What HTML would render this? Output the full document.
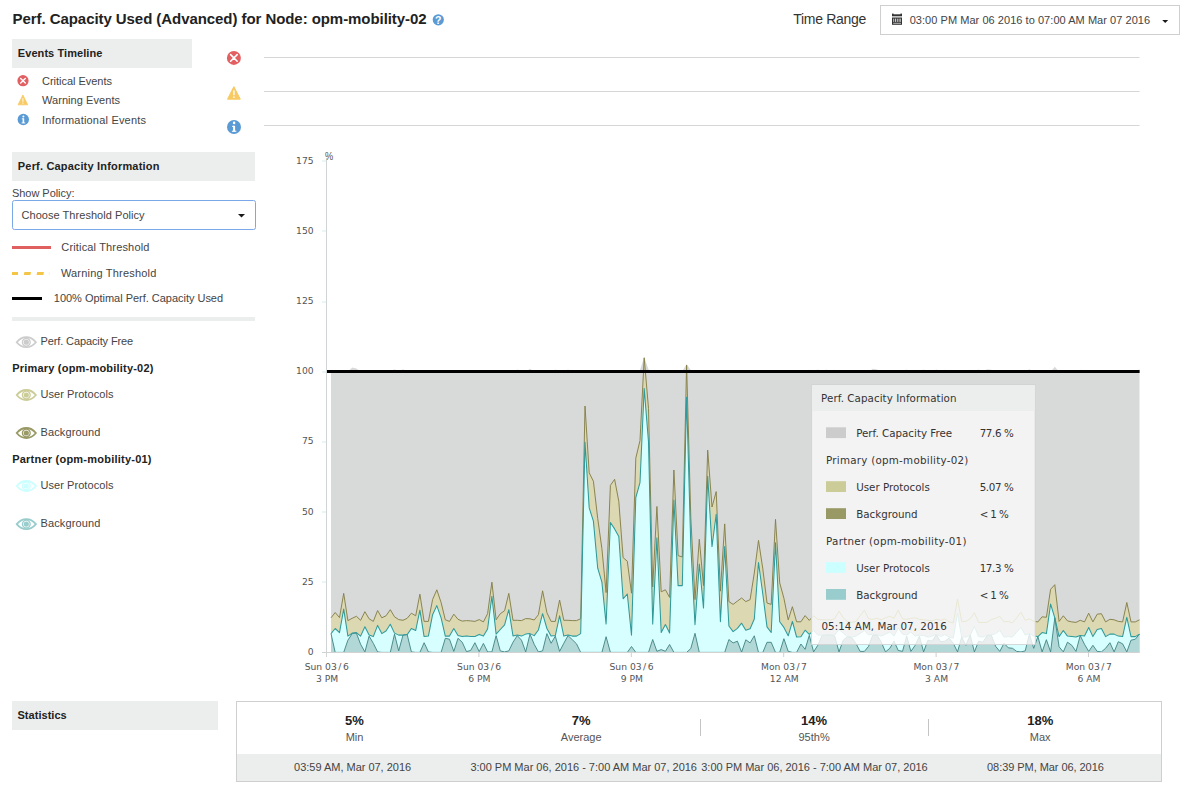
<!DOCTYPE html>
<html lang="en">
<head>
<meta charset="utf-8">
<title>Perf. Capacity Used (Advanced) for Node: opm-mobility-02</title>
<style>
html,body{margin:0;padding:0;background:#fff;}
body{width:1184px;height:787px;overflow:hidden;font-family:"Liberation Sans",sans-serif;}
#page{position:relative;width:1184px;height:787px;overflow:hidden;background:#fff;}
.t{position:absolute;white-space:nowrap;line-height:16px;font-family:"Liberation Sans",sans-serif;}
.box{position:absolute;background:#eceeee;}
.chart{position:absolute;left:0;top:0;}
.sel{position:absolute;left:11.9px;top:200px;width:243.8px;height:29.8px;box-sizing:border-box;border:1.5px solid #7ba8e8;border-radius:2.5px;background:#fff;}
.dd{position:absolute;left:880px;top:5px;width:298px;height:28px;border:1px solid #cfcfcf;background:#fff;}
.stats{position:absolute;left:236px;top:701px;width:926px;height:81px;border:1px solid #cfcfcf;box-sizing:border-box;background:#fff;}
.stats .row2{position:absolute;left:0;right:0;top:52px;bottom:0;background:#eceeee;}
.sep{position:absolute;top:17px;width:1px;height:17px;background:#c4c4c4;}

</style>
</head>
<body>
<div id="page">
<div class="box" style="left:12px;top:39px;width:180px;height:29px"></div>
<div class="box" style="left:12px;top:152px;width:243px;height:29px"></div>
<div class="box" style="left:12px;top:317px;width:243px;height:4px"></div>
<div class="box" style="left:12px;top:701px;width:206px;height:29px"></div>
<div class="sel"></div>
<div class="dd"></div>
<div class="stats"><div class="row2"></div><div class="sep" style="left:463px"></div><div class="sep" style="left:691px"></div></div>

<svg class="chart" width="1184" height="787" viewBox="0 0 1184 787">
<rect x="264" y="57.0" width="875.5" height="1" fill="#d6d6d6"/>
<rect x="264" y="91.0" width="875.5" height="1" fill="#d6d6d6"/>
<rect x="264" y="125.0" width="875.5" height="1" fill="#d6d6d6"/>
<polygon points="331.0,652.4 331.0,371.8 335.2,371.8 339.5,371.8 343.7,371.8 347.9,371.8 352.2,367.6 356.4,368.4 360.6,371.8 364.9,371.8 369.1,371.8 373.3,371.8 377.6,371.8 381.8,371.8 386.0,371.8 390.3,371.8 394.5,369.3 398.7,371.8 403.0,369.3 407.2,371.8 411.4,371.8 415.7,371.8 419.9,371.8 424.1,371.8 428.4,371.8 432.6,371.8 436.8,371.8 441.1,371.8 445.3,371.8 449.5,371.8 453.8,371.8 458.0,371.8 462.2,371.8 466.5,371.8 470.7,371.8 474.9,371.8 479.2,371.8 483.4,371.8 487.6,371.8 491.9,371.8 496.1,371.8 500.3,371.8 504.6,371.8 508.8,371.8 513.0,371.8 517.3,369.6 521.5,371.8 525.7,371.8 530.0,368.7 534.2,371.8 538.4,371.8 542.6,371.8 546.9,371.8 551.1,371.8 555.3,369.4 559.6,371.8 563.8,371.8 568.0,369.4 572.3,371.8 576.5,371.8 580.7,371.8 585.0,371.8 589.2,371.8 593.4,371.8 597.7,371.8 601.9,371.8 606.1,371.8 610.4,371.8 614.6,371.8 618.8,371.8 623.1,371.8 627.3,371.8 631.5,371.8 635.8,371.8 640.0,370.1 644.2,356.9 648.5,369.6 652.7,371.8 656.9,371.8 661.2,371.8 665.4,371.8 669.6,371.8 673.9,371.8 678.1,371.8 682.3,371.0 686.6,364.2 690.8,370.1 695.0,371.8 699.3,371.8 703.5,371.8 707.7,371.8 712.0,371.8 716.2,371.8 720.4,371.8 724.7,371.8 728.9,371.8 733.1,371.8 737.4,371.8 741.6,371.8 745.8,371.8 750.1,371.8 754.3,371.8 758.5,371.8 762.8,371.8 767.0,371.8 771.2,371.8 775.5,371.8 779.7,371.8 783.9,371.8 788.2,371.8 792.4,371.8 796.6,371.8 800.9,371.8 805.1,371.8 809.3,369.8 813.6,371.8 817.8,369.6 822.0,371.8 826.3,369.6 830.5,371.8 834.7,369.8 839.0,371.8 843.2,371.8 847.4,371.8 851.7,371.8 855.9,371.8 860.1,371.8 864.4,371.8 868.6,371.8 872.8,368.7 877.1,369.6 881.3,371.8 885.5,371.8 889.8,371.8 894.0,371.8 898.2,371.8 902.5,371.8 906.7,369.6 910.9,371.8 915.2,369.8 919.4,371.8 923.6,369.6 927.9,371.8 932.1,371.8 936.3,369.6 940.6,371.8 944.8,369.8 949.0,371.8 953.3,371.8 957.5,371.8 961.7,371.8 965.9,371.8 970.2,369.8 974.4,371.8 978.6,369.6 982.9,371.8 987.1,369.3 991.3,369.8 995.6,371.8 999.8,371.8 1004.0,371.8 1008.3,371.8 1012.5,371.8 1016.7,371.8 1021.0,371.8 1025.2,371.8 1029.4,369.3 1033.7,371.8 1037.9,371.8 1042.1,371.8 1046.4,371.8 1050.6,371.8 1054.8,366.7 1059.1,371.8 1063.3,371.8 1067.5,371.8 1071.8,371.8 1076.0,371.8 1080.2,369.8 1084.5,371.8 1088.7,371.8 1092.9,371.8 1097.2,371.8 1101.4,371.8 1105.6,371.8 1109.9,371.8 1114.1,371.8 1118.3,371.8 1122.6,371.8 1126.8,371.8 1131.0,371.8 1135.3,371.8 1139.5,369.3 1139.5,652.4" fill="#d8d9d9"/>
<polygon points="331.0,652.4 331.0,617.8 335.2,612.5 339.5,617.6 343.7,593.4 347.9,620.6 352.2,618.3 356.4,616.3 360.6,620.3 364.9,611.7 369.1,618.8 373.3,621.4 377.6,610.5 381.8,617.8 386.0,615.8 390.3,609.7 394.5,616.8 398.7,619.6 403.0,620.3 407.2,618.3 411.4,613.2 415.7,615.8 419.9,594.2 424.1,621.4 428.4,621.4 432.6,599.5 436.8,589.8 441.1,602.5 445.3,619.8 449.5,621.4 453.8,614.2 458.0,619.3 462.2,621.1 466.5,620.6 470.7,620.9 474.9,621.4 479.2,619.6 483.4,621.9 487.6,613.7 491.9,582.2 496.1,619.8 500.3,613.7 504.6,610.7 508.8,593.4 513.0,620.3 517.3,620.3 521.5,620.6 525.7,618.6 530.0,618.8 534.2,620.0 538.4,614.7 542.6,590.8 546.9,612.7 551.1,621.4 555.3,621.4 559.6,600.0 563.8,620.3 568.0,620.3 572.3,620.6 576.5,620.6 580.7,618.8 585.0,406.0 589.2,472.8 593.4,481.2 597.7,518.3 601.9,548.6 606.1,592.6 610.4,485.4 614.6,479.3 618.8,501.4 623.1,557.6 627.3,561.2 631.5,593.2 635.8,458.2 640.0,440.5 644.2,357.8 648.5,408.3 652.7,587.0 656.9,506.5 661.2,591.8 665.4,589.8 669.6,597.4 673.9,470.0 678.1,555.6 682.3,557.0 686.6,365.1 690.8,517.7 695.0,599.6 699.3,539.3 703.5,585.6 707.7,450.1 712.0,507.0 716.2,491.6 720.4,591.2 724.7,523.9 728.9,601.6 733.1,604.4 737.4,601.1 741.6,598.0 745.8,601.6 750.1,599.6 754.3,573.0 758.5,540.4 762.8,568.8 767.0,603.0 771.2,604.4 775.5,519.4 779.7,582.8 783.9,598.2 788.2,619.9 792.4,606.7 796.6,621.8 800.9,621.8 805.1,615.6 809.3,620.4 813.6,615.8 817.8,619.3 822.0,619.8 826.3,619.8 830.5,619.8 834.7,618.8 839.0,611.2 843.2,617.8 847.4,621.4 851.7,622.4 855.9,621.4 860.1,615.8 864.4,610.2 868.6,618.8 872.8,619.3 877.1,618.3 881.3,619.8 885.5,617.8 889.8,616.3 894.0,618.3 898.2,610.2 902.5,618.8 906.7,619.3 910.9,618.3 915.2,617.8 919.4,619.3 923.6,619.8 927.9,620.3 932.1,620.9 936.3,619.3 940.6,620.3 944.8,618.8 949.0,621.9 953.3,622.9 957.5,599.0 961.7,621.4 965.9,621.4 970.2,618.8 974.4,612.7 978.6,622.4 982.9,622.4 987.1,622.4 991.3,619.3 995.6,618.3 999.8,616.3 1004.0,621.9 1008.3,621.4 1012.5,622.9 1016.7,617.8 1021.0,612.2 1025.2,620.3 1029.4,618.8 1033.7,621.4 1037.9,621.9 1042.1,616.8 1046.4,617.3 1050.6,589.3 1054.8,584.7 1059.1,621.4 1063.3,615.8 1067.5,620.9 1071.8,621.9 1076.0,622.4 1080.2,620.3 1084.5,621.9 1088.7,613.2 1092.9,621.9 1097.2,614.2 1101.4,613.7 1105.6,621.9 1109.9,619.3 1114.1,619.8 1118.3,621.4 1122.6,621.9 1126.8,602.5 1131.0,621.9 1135.3,621.9 1139.5,619.8 1139.5,652.4" fill="#dbd8b2"/>
<polygon points="331.0,652.4 331.0,633.6 335.2,628.5 339.5,632.6 343.7,609.1 347.9,636.1 352.2,633.1 356.4,632.6 360.6,636.1 364.9,626.8 369.1,635.1 373.3,636.6 377.6,625.4 381.8,633.6 386.0,631.0 390.3,624.2 394.5,633.1 398.7,635.1 403.0,635.1 407.2,634.6 411.4,628.5 415.7,630.5 419.9,610.2 424.1,636.6 428.4,636.1 432.6,614.7 436.8,605.6 441.1,617.8 445.3,636.1 449.5,636.1 453.8,628.5 458.0,635.6 462.2,636.6 466.5,635.9 470.7,636.4 474.9,636.4 479.2,634.4 483.4,636.1 487.6,629.0 491.9,596.4 496.1,634.1 500.3,629.5 504.6,624.9 508.8,609.7 513.0,635.9 517.3,634.9 521.5,636.1 525.7,634.1 530.0,633.6 534.2,635.6 538.4,630.0 542.6,613.7 546.9,628.5 551.1,636.1 555.3,635.6 559.6,615.8 563.8,636.1 568.0,635.1 572.3,636.1 576.5,636.1 580.7,633.6 585.0,442.2 589.2,507.9 593.4,521.1 597.7,568.2 601.9,582.2 606.1,624.1 610.4,522.5 614.6,528.9 618.8,536.5 623.1,598.8 627.3,594.0 631.5,635.3 635.8,497.5 640.0,482.6 644.2,388.6 648.5,441.9 652.7,624.1 656.9,537.9 661.2,632.5 665.4,624.6 669.6,633.0 673.9,500.0 678.1,585.6 682.3,585.6 686.6,397.3 690.8,545.8 695.0,624.6 699.3,564.0 703.5,608.1 707.7,476.2 712.0,546.6 716.2,514.3 720.4,621.8 724.7,546.6 728.9,626.0 733.1,631.6 737.4,628.3 741.6,623.2 745.8,630.2 750.1,628.8 754.3,619.0 758.5,562.6 762.8,594.0 767.0,626.9 771.2,632.5 775.5,542.7 779.7,621.8 783.9,627.4 788.2,635.8 792.4,621.5 796.6,637.0 800.9,636.7 805.1,630.2 809.3,634.4 813.6,630.5 817.8,635.1 822.0,635.1 826.3,635.1 830.5,635.1 834.7,635.1 839.0,629.5 843.2,633.1 847.4,636.6 851.7,637.1 855.9,636.1 860.1,633.6 864.4,630.5 868.6,635.1 872.8,634.1 877.1,634.6 881.3,636.1 885.5,634.1 889.8,632.1 894.0,636.1 898.2,628.0 902.5,634.1 906.7,635.1 910.9,632.1 915.2,636.1 919.4,635.1 923.6,635.6 927.9,637.1 932.1,636.1 936.3,634.1 940.6,636.6 944.8,634.6 949.0,637.1 953.3,638.1 957.5,613.2 961.7,637.1 965.9,637.1 970.2,635.1 974.4,626.4 978.6,636.6 982.9,637.1 987.1,635.1 991.3,635.1 995.6,633.6 999.8,630.5 1004.0,637.1 1008.3,636.6 1012.5,637.1 1016.7,632.1 1021.0,627.5 1025.2,635.1 1029.4,633.6 1033.7,636.1 1037.9,636.6 1042.1,632.6 1046.4,633.6 1050.6,604.1 1054.8,617.8 1059.1,636.6 1063.3,630.5 1067.5,636.1 1071.8,636.6 1076.0,637.1 1080.2,635.6 1084.5,636.1 1088.7,627.5 1092.9,636.6 1097.2,629.5 1101.4,628.5 1105.6,636.6 1109.9,634.1 1114.1,634.1 1118.3,636.1 1122.6,636.6 1126.8,617.3 1131.0,636.6 1135.3,636.6 1139.5,634.1 1139.5,652.4" fill="#d8ffff"/>
<polygon points="331.0,652.4 331.0,633.6 335.2,652.4 339.5,652.4 343.7,652.4 347.9,640.2 352.2,633.6 356.4,633.1 360.6,644.3 364.9,651.9 369.1,636.1 373.3,643.3 377.6,651.9 381.8,652.4 386.0,652.4 390.3,652.4 394.5,634.1 398.7,650.9 403.0,635.1 407.2,634.6 411.4,651.9 415.7,652.4 419.9,652.4 424.1,642.7 428.4,651.9 432.6,652.4 436.8,652.4 441.1,652.4 445.3,638.3 449.5,639.2 453.8,651.4 458.0,638.3 462.2,642.2 466.5,651.6 470.7,650.4 474.9,642.7 479.2,651.6 483.4,643.4 487.6,651.9 491.9,651.9 496.1,635.6 500.3,650.9 504.6,651.9 508.8,650.9 513.0,642.2 517.3,635.6 521.5,640.2 525.7,651.9 530.0,634.1 534.2,644.3 538.4,651.9 542.6,650.9 546.9,633.6 551.1,643.3 555.3,636.1 559.6,651.4 563.8,643.3 568.0,635.6 572.3,639.7 576.5,643.8 580.7,652.4 585.0,652.4 589.2,652.4 593.4,652.4 597.7,652.4 601.9,652.4 606.1,636.7 610.4,652.4 614.6,652.4 618.8,652.4 623.1,652.4 627.3,652.4 631.5,646.5 635.8,652.4 640.0,652.4 644.2,652.4 648.5,652.4 652.7,639.5 656.9,651.3 661.2,649.6 665.4,651.3 669.6,644.5 673.9,652.4 678.1,652.4 682.3,652.4 686.6,652.4 690.8,648.5 695.0,633.3 699.3,652.4 703.5,652.4 707.7,652.4 712.0,652.4 716.2,652.4 720.4,652.4 724.7,652.4 728.9,639.5 733.1,642.9 737.4,641.2 741.6,652.1 745.8,639.8 750.1,642.9 754.3,635.8 758.5,652.4 762.8,652.4 767.0,642.3 771.2,642.3 775.5,652.4 779.7,652.4 783.9,638.7 788.2,651.3 792.4,652.4 796.6,652.4 800.9,644.0 805.1,649.3 809.3,635.3 813.6,651.9 817.8,645.3 822.0,635.6 826.3,635.1 830.5,635.1 834.7,636.1 839.0,651.9 843.2,640.2 847.4,636.6 851.7,637.6 855.9,643.3 860.1,651.4 864.4,651.4 868.6,646.3 872.8,635.1 877.1,635.1 881.3,642.2 885.5,651.9 889.8,648.3 894.0,641.2 898.2,650.4 902.5,651.4 906.7,636.1 910.9,651.4 915.2,645.3 919.4,636.1 923.6,651.9 927.9,640.2 932.1,641.2 936.3,634.6 940.6,641.7 944.8,641.2 949.0,638.1 953.3,643.3 957.5,651.9 961.7,637.1 965.9,645.3 970.2,635.1 974.4,651.9 978.6,641.2 982.9,642.2 987.1,635.6 991.3,635.1 995.6,646.3 999.8,651.4 1004.0,643.3 1008.3,647.8 1012.5,648.3 1016.7,651.4 1021.0,651.9 1025.2,650.9 1029.4,634.1 1033.7,648.3 1037.9,636.6 1042.1,651.9 1046.4,639.7 1050.6,651.9 1054.8,617.8 1059.1,646.8 1063.3,651.9 1067.5,642.2 1071.8,645.3 1076.0,651.4 1080.2,635.6 1084.5,644.3 1088.7,651.4 1092.9,645.3 1097.2,651.4 1101.4,651.9 1105.6,648.3 1109.9,642.7 1114.1,651.9 1118.3,641.7 1122.6,643.8 1126.8,651.9 1131.0,640.2 1135.3,639.2 1139.5,634.1 1139.5,652.4" fill="#b1d8d6"/>
<polyline points="331.0,633.6 335.2,652.4 339.5,652.4 343.7,652.4 347.9,640.2 352.2,633.6 356.4,633.1 360.6,644.3 364.9,651.9 369.1,636.1 373.3,643.3 377.6,651.9 381.8,652.4 386.0,652.4 390.3,652.4 394.5,634.1 398.7,650.9 403.0,635.1 407.2,634.6 411.4,651.9 415.7,652.4 419.9,652.4 424.1,642.7 428.4,651.9 432.6,652.4 436.8,652.4 441.1,652.4 445.3,638.3 449.5,639.2 453.8,651.4 458.0,638.3 462.2,642.2 466.5,651.6 470.7,650.4 474.9,642.7 479.2,651.6 483.4,643.4 487.6,651.9 491.9,651.9 496.1,635.6 500.3,650.9 504.6,651.9 508.8,650.9 513.0,642.2 517.3,635.6 521.5,640.2 525.7,651.9 530.0,634.1 534.2,644.3 538.4,651.9 542.6,650.9 546.9,633.6 551.1,643.3 555.3,636.1 559.6,651.4 563.8,643.3 568.0,635.6 572.3,639.7 576.5,643.8 580.7,652.4 585.0,652.4 589.2,652.4 593.4,652.4 597.7,652.4 601.9,652.4 606.1,636.7 610.4,652.4 614.6,652.4 618.8,652.4 623.1,652.4 627.3,652.4 631.5,646.5 635.8,652.4 640.0,652.4 644.2,652.4 648.5,652.4 652.7,639.5 656.9,651.3 661.2,649.6 665.4,651.3 669.6,644.5 673.9,652.4 678.1,652.4 682.3,652.4 686.6,652.4 690.8,648.5 695.0,633.3 699.3,652.4 703.5,652.4 707.7,652.4 712.0,652.4 716.2,652.4 720.4,652.4 724.7,652.4 728.9,639.5 733.1,642.9 737.4,641.2 741.6,652.1 745.8,639.8 750.1,642.9 754.3,635.8 758.5,652.4 762.8,652.4 767.0,642.3 771.2,642.3 775.5,652.4 779.7,652.4 783.9,638.7 788.2,651.3 792.4,652.4 796.6,652.4 800.9,644.0 805.1,649.3 809.3,635.3 813.6,651.9 817.8,645.3 822.0,635.6 826.3,635.1 830.5,635.1 834.7,636.1 839.0,651.9 843.2,640.2 847.4,636.6 851.7,637.6 855.9,643.3 860.1,651.4 864.4,651.4 868.6,646.3 872.8,635.1 877.1,635.1 881.3,642.2 885.5,651.9 889.8,648.3 894.0,641.2 898.2,650.4 902.5,651.4 906.7,636.1 910.9,651.4 915.2,645.3 919.4,636.1 923.6,651.9 927.9,640.2 932.1,641.2 936.3,634.6 940.6,641.7 944.8,641.2 949.0,638.1 953.3,643.3 957.5,651.9 961.7,637.1 965.9,645.3 970.2,635.1 974.4,651.9 978.6,641.2 982.9,642.2 987.1,635.6 991.3,635.1 995.6,646.3 999.8,651.4 1004.0,643.3 1008.3,647.8 1012.5,648.3 1016.7,651.4 1021.0,651.9 1025.2,650.9 1029.4,634.1 1033.7,648.3 1037.9,636.6 1042.1,651.9 1046.4,639.7 1050.6,651.9 1054.8,617.8 1059.1,646.8 1063.3,651.9 1067.5,642.2 1071.8,645.3 1076.0,651.4 1080.2,635.6 1084.5,644.3 1088.7,651.4 1092.9,645.3 1097.2,651.4 1101.4,651.9 1105.6,648.3 1109.9,642.7 1114.1,651.9 1118.3,641.7 1122.6,643.8 1126.8,651.9 1131.0,640.2 1135.3,639.2 1139.5,634.1" fill="none" stroke="#3f8282" stroke-width="0.9" stroke-linejoin="round"/>
<polyline points="331.0,617.8 335.2,612.5 339.5,617.6 343.7,593.4 347.9,620.6 352.2,618.3 356.4,616.3 360.6,620.3 364.9,611.7 369.1,618.8 373.3,621.4 377.6,610.5 381.8,617.8 386.0,615.8 390.3,609.7 394.5,616.8 398.7,619.6 403.0,620.3 407.2,618.3 411.4,613.2 415.7,615.8 419.9,594.2 424.1,621.4 428.4,621.4 432.6,599.5 436.8,589.8 441.1,602.5 445.3,619.8 449.5,621.4 453.8,614.2 458.0,619.3 462.2,621.1 466.5,620.6 470.7,620.9 474.9,621.4 479.2,619.6 483.4,621.9 487.6,613.7 491.9,582.2 496.1,619.8 500.3,613.7 504.6,610.7 508.8,593.4 513.0,620.3 517.3,620.3 521.5,620.6 525.7,618.6 530.0,618.8 534.2,620.0 538.4,614.7 542.6,590.8 546.9,612.7 551.1,621.4 555.3,621.4 559.6,600.0 563.8,620.3 568.0,620.3 572.3,620.6 576.5,620.6 580.7,618.8 585.0,406.0 589.2,472.8 593.4,481.2 597.7,518.3 601.9,548.6 606.1,592.6 610.4,485.4 614.6,479.3 618.8,501.4 623.1,557.6 627.3,561.2 631.5,593.2 635.8,458.2 640.0,440.5 644.2,357.8 648.5,408.3 652.7,587.0 656.9,506.5 661.2,591.8 665.4,589.8 669.6,597.4 673.9,470.0 678.1,555.6 682.3,557.0 686.6,365.1 690.8,517.7 695.0,599.6 699.3,539.3 703.5,585.6 707.7,450.1 712.0,507.0 716.2,491.6 720.4,591.2 724.7,523.9 728.9,601.6 733.1,604.4 737.4,601.1 741.6,598.0 745.8,601.6 750.1,599.6 754.3,573.0 758.5,540.4 762.8,568.8 767.0,603.0 771.2,604.4 775.5,519.4 779.7,582.8 783.9,598.2 788.2,619.9 792.4,606.7 796.6,621.8 800.9,621.8 805.1,615.6 809.3,620.4 813.6,615.8 817.8,619.3 822.0,619.8 826.3,619.8 830.5,619.8 834.7,618.8 839.0,611.2 843.2,617.8 847.4,621.4 851.7,622.4 855.9,621.4 860.1,615.8 864.4,610.2 868.6,618.8 872.8,619.3 877.1,618.3 881.3,619.8 885.5,617.8 889.8,616.3 894.0,618.3 898.2,610.2 902.5,618.8 906.7,619.3 910.9,618.3 915.2,617.8 919.4,619.3 923.6,619.8 927.9,620.3 932.1,620.9 936.3,619.3 940.6,620.3 944.8,618.8 949.0,621.9 953.3,622.9 957.5,599.0 961.7,621.4 965.9,621.4 970.2,618.8 974.4,612.7 978.6,622.4 982.9,622.4 987.1,622.4 991.3,619.3 995.6,618.3 999.8,616.3 1004.0,621.9 1008.3,621.4 1012.5,622.9 1016.7,617.8 1021.0,612.2 1025.2,620.3 1029.4,618.8 1033.7,621.4 1037.9,621.9 1042.1,616.8 1046.4,617.3 1050.6,589.3 1054.8,584.7 1059.1,621.4 1063.3,615.8 1067.5,620.9 1071.8,621.9 1076.0,622.4 1080.2,620.3 1084.5,621.9 1088.7,613.2 1092.9,621.9 1097.2,614.2 1101.4,613.7 1105.6,621.9 1109.9,619.3 1114.1,619.8 1118.3,621.4 1122.6,621.9 1126.8,602.5 1131.0,621.9 1135.3,621.9 1139.5,619.8" fill="none" stroke="#857f4a" stroke-width="0.95" stroke-linejoin="round"/>
<polyline points="331.0,633.6 335.2,628.5 339.5,632.6 343.7,609.1 347.9,636.1 352.2,633.1 356.4,632.6 360.6,636.1 364.9,626.8 369.1,635.1 373.3,636.6 377.6,625.4 381.8,633.6 386.0,631.0 390.3,624.2 394.5,633.1 398.7,635.1 403.0,635.1 407.2,634.6 411.4,628.5 415.7,630.5 419.9,610.2 424.1,636.6 428.4,636.1 432.6,614.7 436.8,605.6 441.1,617.8 445.3,636.1 449.5,636.1 453.8,628.5 458.0,635.6 462.2,636.6 466.5,635.9 470.7,636.4 474.9,636.4 479.2,634.4 483.4,636.1 487.6,629.0 491.9,596.4 496.1,634.1 500.3,629.5 504.6,624.9 508.8,609.7 513.0,635.9 517.3,634.9 521.5,636.1 525.7,634.1 530.0,633.6 534.2,635.6 538.4,630.0 542.6,613.7 546.9,628.5 551.1,636.1 555.3,635.6 559.6,615.8 563.8,636.1 568.0,635.1 572.3,636.1 576.5,636.1 580.7,633.6 585.0,442.2 589.2,507.9 593.4,521.1 597.7,568.2 601.9,582.2 606.1,624.1 610.4,522.5 614.6,528.9 618.8,536.5 623.1,598.8 627.3,594.0 631.5,635.3 635.8,497.5 640.0,482.6 644.2,388.6 648.5,441.9 652.7,624.1 656.9,537.9 661.2,632.5 665.4,624.6 669.6,633.0 673.9,500.0 678.1,585.6 682.3,585.6 686.6,397.3 690.8,545.8 695.0,624.6 699.3,564.0 703.5,608.1 707.7,476.2 712.0,546.6 716.2,514.3 720.4,621.8 724.7,546.6 728.9,626.0 733.1,631.6 737.4,628.3 741.6,623.2 745.8,630.2 750.1,628.8 754.3,619.0 758.5,562.6 762.8,594.0 767.0,626.9 771.2,632.5 775.5,542.7 779.7,621.8 783.9,627.4 788.2,635.8 792.4,621.5 796.6,637.0 800.9,636.7 805.1,630.2 809.3,634.4 813.6,630.5 817.8,635.1 822.0,635.1 826.3,635.1 830.5,635.1 834.7,635.1 839.0,629.5 843.2,633.1 847.4,636.6 851.7,637.1 855.9,636.1 860.1,633.6 864.4,630.5 868.6,635.1 872.8,634.1 877.1,634.6 881.3,636.1 885.5,634.1 889.8,632.1 894.0,636.1 898.2,628.0 902.5,634.1 906.7,635.1 910.9,632.1 915.2,636.1 919.4,635.1 923.6,635.6 927.9,637.1 932.1,636.1 936.3,634.1 940.6,636.6 944.8,634.6 949.0,637.1 953.3,638.1 957.5,613.2 961.7,637.1 965.9,637.1 970.2,635.1 974.4,626.4 978.6,636.6 982.9,637.1 987.1,635.1 991.3,635.1 995.6,633.6 999.8,630.5 1004.0,637.1 1008.3,636.6 1012.5,637.1 1016.7,632.1 1021.0,627.5 1025.2,635.1 1029.4,633.6 1033.7,636.1 1037.9,636.6 1042.1,632.6 1046.4,633.6 1050.6,604.1 1054.8,617.8 1059.1,636.6 1063.3,630.5 1067.5,636.1 1071.8,636.6 1076.0,637.1 1080.2,635.6 1084.5,636.1 1088.7,627.5 1092.9,636.6 1097.2,629.5 1101.4,628.5 1105.6,636.6 1109.9,634.1 1114.1,634.1 1118.3,636.1 1122.6,636.6 1126.8,617.3 1131.0,636.6 1135.3,636.6 1139.5,634.1" fill="none" stroke="#2f9a9a" stroke-width="1.05" stroke-linejoin="round"/>
<rect x="326" y="158" width="1" height="499" fill="#d0d4d4"/>
<rect x="322" y="652" width="817.5" height="1" fill="#d2d2d2"/>
<rect x="322" y="581.5" width="4" height="1" fill="#d6ecee"/>
<rect x="322" y="511.5" width="4" height="1" fill="#d6ecee"/>
<rect x="322" y="441.5" width="4" height="1" fill="#d6ecee"/>
<rect x="322" y="371.5" width="4" height="1" fill="#d6ecee"/>
<rect x="322" y="301.5" width="4" height="1" fill="#d6ecee"/>
<rect x="322" y="230.5" width="4" height="1" fill="#d6ecee"/>
<rect x="322" y="160.5" width="4" height="1" fill="#d6ecee"/>
<text x="313.6" y="654.8" text-anchor="end" font-size="9.2" fill="#555" font-family='"DejaVu Sans", "Liberation Sans", sans-serif'>0</text>
<text x="313.6" y="584.6" text-anchor="end" font-size="9.2" fill="#555" font-family='"DejaVu Sans", "Liberation Sans", sans-serif'>25</text>
<text x="313.6" y="514.5" text-anchor="end" font-size="9.2" fill="#555" font-family='"DejaVu Sans", "Liberation Sans", sans-serif'>50</text>
<text x="313.6" y="444.3" text-anchor="end" font-size="9.2" fill="#555" font-family='"DejaVu Sans", "Liberation Sans", sans-serif'>75</text>
<text x="313.6" y="374.2" text-anchor="end" font-size="9.2" fill="#555" font-family='"DejaVu Sans", "Liberation Sans", sans-serif'>100</text>
<text x="313.6" y="304.0" text-anchor="end" font-size="9.2" fill="#555" font-family='"DejaVu Sans", "Liberation Sans", sans-serif'>125</text>
<text x="313.6" y="233.9" text-anchor="end" font-size="9.2" fill="#555" font-family='"DejaVu Sans", "Liberation Sans", sans-serif'>150</text>
<text x="313.6" y="163.7" text-anchor="end" font-size="9.2" fill="#555" font-family='"DejaVu Sans", "Liberation Sans", sans-serif'>175</text>
<text x="324.9" y="160" font-size="10.5" fill="#555" textLength="8.2" lengthAdjust="spacingAndGlyphs" font-family='"Liberation Sans", sans-serif'>%</text>
<text x="304.7" y="669.9" font-size="9.2" fill="#555" font-family='"DejaVu Sans", "Liberation Sans", sans-serif'>Sun 03<tspan dx="1.5">/</tspan><tspan dx="1.5">6</tspan></text>
<text x="327.0" y="681.9" text-anchor="middle" font-size="9.2" fill="#555" font-family='"DejaVu Sans", "Liberation Sans", sans-serif'>3 PM</text>
<rect x="478.4" y="652" width="1" height="5" fill="#d0d0d0"/>
<text x="457.1" y="669.9" font-size="9.2" fill="#555" font-family='"DejaVu Sans", "Liberation Sans", sans-serif'>Sun 03<tspan dx="1.5">/</tspan><tspan dx="1.5">6</tspan></text>
<text x="479.4" y="681.9" text-anchor="middle" font-size="9.2" fill="#555" font-family='"DejaVu Sans", "Liberation Sans", sans-serif'>6 PM</text>
<rect x="630.8" y="652" width="1" height="5" fill="#d0d0d0"/>
<text x="609.5" y="669.9" font-size="9.2" fill="#555" font-family='"DejaVu Sans", "Liberation Sans", sans-serif'>Sun 03<tspan dx="1.5">/</tspan><tspan dx="1.5">6</tspan></text>
<text x="631.8" y="681.9" text-anchor="middle" font-size="9.2" fill="#555" font-family='"DejaVu Sans", "Liberation Sans", sans-serif'>9 PM</text>
<rect x="783.2" y="652" width="1" height="5" fill="#d0d0d0"/>
<text x="761.0" y="669.9" font-size="9.2" fill="#555" font-family='"DejaVu Sans", "Liberation Sans", sans-serif'>Mon 03<tspan dx="1.5">/</tspan><tspan dx="1.5">7</tspan></text>
<text x="784.2" y="681.9" text-anchor="middle" font-size="9.2" fill="#555" font-family='"DejaVu Sans", "Liberation Sans", sans-serif'>12 AM</text>
<rect x="935.6" y="652" width="1" height="5" fill="#d0d0d0"/>
<text x="913.4" y="669.9" font-size="9.2" fill="#555" font-family='"DejaVu Sans", "Liberation Sans", sans-serif'>Mon 03<tspan dx="1.5">/</tspan><tspan dx="1.5">7</tspan></text>
<text x="936.6" y="681.9" text-anchor="middle" font-size="9.2" fill="#555" font-family='"DejaVu Sans", "Liberation Sans", sans-serif'>3 AM</text>
<rect x="1088.0" y="652" width="1" height="5" fill="#d0d0d0"/>
<text x="1065.8" y="669.9" font-size="9.2" fill="#555" font-family='"DejaVu Sans", "Liberation Sans", sans-serif'>Mon 03<tspan dx="1.5">/</tspan><tspan dx="1.5">7</tspan></text>
<text x="1089.0" y="681.9" text-anchor="middle" font-size="9.2" fill="#555" font-family='"DejaVu Sans", "Liberation Sans", sans-serif'>6 AM</text>
<rect x="327" y="370" width="812.6" height="3" fill="#000"/>
<defs><clipPath id="ttc"><rect x="812.1" y="385" width="222.6" height="258.9"/></clipPath></defs>
<g>
<rect x="811.6" y="384.5" width="223.6" height="259.9" fill="#f3f3f3" stroke="#d2d4d4" stroke-width="1"/>
<g clip-path="url(#ttc)">
<polygon points="331.0,652.4 331.0,633.6 335.2,628.5 339.5,632.6 343.7,609.1 347.9,636.1 352.2,633.1 356.4,632.6 360.6,636.1 364.9,626.8 369.1,635.1 373.3,636.6 377.6,625.4 381.8,633.6 386.0,631.0 390.3,624.2 394.5,633.1 398.7,635.1 403.0,635.1 407.2,634.6 411.4,628.5 415.7,630.5 419.9,610.2 424.1,636.6 428.4,636.1 432.6,614.7 436.8,605.6 441.1,617.8 445.3,636.1 449.5,636.1 453.8,628.5 458.0,635.6 462.2,636.6 466.5,635.9 470.7,636.4 474.9,636.4 479.2,634.4 483.4,636.1 487.6,629.0 491.9,596.4 496.1,634.1 500.3,629.5 504.6,624.9 508.8,609.7 513.0,635.9 517.3,634.9 521.5,636.1 525.7,634.1 530.0,633.6 534.2,635.6 538.4,630.0 542.6,613.7 546.9,628.5 551.1,636.1 555.3,635.6 559.6,615.8 563.8,636.1 568.0,635.1 572.3,636.1 576.5,636.1 580.7,633.6 585.0,442.2 589.2,507.9 593.4,521.1 597.7,568.2 601.9,582.2 606.1,624.1 610.4,522.5 614.6,528.9 618.8,536.5 623.1,598.8 627.3,594.0 631.5,635.3 635.8,497.5 640.0,482.6 644.2,388.6 648.5,441.9 652.7,624.1 656.9,537.9 661.2,632.5 665.4,624.6 669.6,633.0 673.9,500.0 678.1,585.6 682.3,585.6 686.6,397.3 690.8,545.8 695.0,624.6 699.3,564.0 703.5,608.1 707.7,476.2 712.0,546.6 716.2,514.3 720.4,621.8 724.7,546.6 728.9,626.0 733.1,631.6 737.4,628.3 741.6,623.2 745.8,630.2 750.1,628.8 754.3,619.0 758.5,562.6 762.8,594.0 767.0,626.9 771.2,632.5 775.5,542.7 779.7,621.8 783.9,627.4 788.2,635.8 792.4,621.5 796.6,637.0 800.9,636.7 805.1,630.2 809.3,634.4 813.6,630.5 817.8,635.1 822.0,635.1 826.3,635.1 830.5,635.1 834.7,635.1 839.0,629.5 843.2,633.1 847.4,636.6 851.7,637.1 855.9,636.1 860.1,633.6 864.4,630.5 868.6,635.1 872.8,634.1 877.1,634.6 881.3,636.1 885.5,634.1 889.8,632.1 894.0,636.1 898.2,628.0 902.5,634.1 906.7,635.1 910.9,632.1 915.2,636.1 919.4,635.1 923.6,635.6 927.9,637.1 932.1,636.1 936.3,634.1 940.6,636.6 944.8,634.6 949.0,637.1 953.3,638.1 957.5,613.2 961.7,637.1 965.9,637.1 970.2,635.1 974.4,626.4 978.6,636.6 982.9,637.1 987.1,635.1 991.3,635.1 995.6,633.6 999.8,630.5 1004.0,637.1 1008.3,636.6 1012.5,637.1 1016.7,632.1 1021.0,627.5 1025.2,635.1 1029.4,633.6 1033.7,636.1 1037.9,636.6 1042.1,632.6 1046.4,633.6 1050.6,604.1 1054.8,617.8 1059.1,636.6 1063.3,630.5 1067.5,636.1 1071.8,636.6 1076.0,637.1 1080.2,635.6 1084.5,636.1 1088.7,627.5 1092.9,636.6 1097.2,629.5 1101.4,628.5 1105.6,636.6 1109.9,634.1 1114.1,634.1 1118.3,636.1 1122.6,636.6 1126.8,617.3 1131.0,636.6 1135.3,636.6 1139.5,634.1 1139.5,652.4" fill="#fcffff"/>
<polygon points="331.0,652.4 331.0,633.6 335.2,652.4 339.5,652.4 343.7,652.4 347.9,640.2 352.2,633.6 356.4,633.1 360.6,644.3 364.9,651.9 369.1,636.1 373.3,643.3 377.6,651.9 381.8,652.4 386.0,652.4 390.3,652.4 394.5,634.1 398.7,650.9 403.0,635.1 407.2,634.6 411.4,651.9 415.7,652.4 419.9,652.4 424.1,642.7 428.4,651.9 432.6,652.4 436.8,652.4 441.1,652.4 445.3,638.3 449.5,639.2 453.8,651.4 458.0,638.3 462.2,642.2 466.5,651.6 470.7,650.4 474.9,642.7 479.2,651.6 483.4,643.4 487.6,651.9 491.9,651.9 496.1,635.6 500.3,650.9 504.6,651.9 508.8,650.9 513.0,642.2 517.3,635.6 521.5,640.2 525.7,651.9 530.0,634.1 534.2,644.3 538.4,651.9 542.6,650.9 546.9,633.6 551.1,643.3 555.3,636.1 559.6,651.4 563.8,643.3 568.0,635.6 572.3,639.7 576.5,643.8 580.7,652.4 585.0,652.4 589.2,652.4 593.4,652.4 597.7,652.4 601.9,652.4 606.1,636.7 610.4,652.4 614.6,652.4 618.8,652.4 623.1,652.4 627.3,652.4 631.5,646.5 635.8,652.4 640.0,652.4 644.2,652.4 648.5,652.4 652.7,639.5 656.9,651.3 661.2,649.6 665.4,651.3 669.6,644.5 673.9,652.4 678.1,652.4 682.3,652.4 686.6,652.4 690.8,648.5 695.0,633.3 699.3,652.4 703.5,652.4 707.7,652.4 712.0,652.4 716.2,652.4 720.4,652.4 724.7,652.4 728.9,639.5 733.1,642.9 737.4,641.2 741.6,652.1 745.8,639.8 750.1,642.9 754.3,635.8 758.5,652.4 762.8,652.4 767.0,642.3 771.2,642.3 775.5,652.4 779.7,652.4 783.9,638.7 788.2,651.3 792.4,652.4 796.6,652.4 800.9,644.0 805.1,649.3 809.3,635.3 813.6,651.9 817.8,645.3 822.0,635.6 826.3,635.1 830.5,635.1 834.7,636.1 839.0,651.9 843.2,640.2 847.4,636.6 851.7,637.6 855.9,643.3 860.1,651.4 864.4,651.4 868.6,646.3 872.8,635.1 877.1,635.1 881.3,642.2 885.5,651.9 889.8,648.3 894.0,641.2 898.2,650.4 902.5,651.4 906.7,636.1 910.9,651.4 915.2,645.3 919.4,636.1 923.6,651.9 927.9,640.2 932.1,641.2 936.3,634.6 940.6,641.7 944.8,641.2 949.0,638.1 953.3,643.3 957.5,651.9 961.7,637.1 965.9,645.3 970.2,635.1 974.4,651.9 978.6,641.2 982.9,642.2 987.1,635.6 991.3,635.1 995.6,646.3 999.8,651.4 1004.0,643.3 1008.3,647.8 1012.5,648.3 1016.7,651.4 1021.0,651.9 1025.2,650.9 1029.4,634.1 1033.7,648.3 1037.9,636.6 1042.1,651.9 1046.4,639.7 1050.6,651.9 1054.8,617.8 1059.1,646.8 1063.3,651.9 1067.5,642.2 1071.8,645.3 1076.0,651.4 1080.2,635.6 1084.5,644.3 1088.7,651.4 1092.9,645.3 1097.2,651.4 1101.4,651.9 1105.6,648.3 1109.9,642.7 1114.1,651.9 1118.3,641.7 1122.6,643.8 1126.8,651.9 1131.0,640.2 1135.3,639.2 1139.5,634.1 1139.5,652.4" fill="#ebeeee"/>
<polyline points="331.0,633.6 335.2,652.4 339.5,652.4 343.7,652.4 347.9,640.2 352.2,633.6 356.4,633.1 360.6,644.3 364.9,651.9 369.1,636.1 373.3,643.3 377.6,651.9 381.8,652.4 386.0,652.4 390.3,652.4 394.5,634.1 398.7,650.9 403.0,635.1 407.2,634.6 411.4,651.9 415.7,652.4 419.9,652.4 424.1,642.7 428.4,651.9 432.6,652.4 436.8,652.4 441.1,652.4 445.3,638.3 449.5,639.2 453.8,651.4 458.0,638.3 462.2,642.2 466.5,651.6 470.7,650.4 474.9,642.7 479.2,651.6 483.4,643.4 487.6,651.9 491.9,651.9 496.1,635.6 500.3,650.9 504.6,651.9 508.8,650.9 513.0,642.2 517.3,635.6 521.5,640.2 525.7,651.9 530.0,634.1 534.2,644.3 538.4,651.9 542.6,650.9 546.9,633.6 551.1,643.3 555.3,636.1 559.6,651.4 563.8,643.3 568.0,635.6 572.3,639.7 576.5,643.8 580.7,652.4 585.0,652.4 589.2,652.4 593.4,652.4 597.7,652.4 601.9,652.4 606.1,636.7 610.4,652.4 614.6,652.4 618.8,652.4 623.1,652.4 627.3,652.4 631.5,646.5 635.8,652.4 640.0,652.4 644.2,652.4 648.5,652.4 652.7,639.5 656.9,651.3 661.2,649.6 665.4,651.3 669.6,644.5 673.9,652.4 678.1,652.4 682.3,652.4 686.6,652.4 690.8,648.5 695.0,633.3 699.3,652.4 703.5,652.4 707.7,652.4 712.0,652.4 716.2,652.4 720.4,652.4 724.7,652.4 728.9,639.5 733.1,642.9 737.4,641.2 741.6,652.1 745.8,639.8 750.1,642.9 754.3,635.8 758.5,652.4 762.8,652.4 767.0,642.3 771.2,642.3 775.5,652.4 779.7,652.4 783.9,638.7 788.2,651.3 792.4,652.4 796.6,652.4 800.9,644.0 805.1,649.3 809.3,635.3 813.6,651.9 817.8,645.3 822.0,635.6 826.3,635.1 830.5,635.1 834.7,636.1 839.0,651.9 843.2,640.2 847.4,636.6 851.7,637.6 855.9,643.3 860.1,651.4 864.4,651.4 868.6,646.3 872.8,635.1 877.1,635.1 881.3,642.2 885.5,651.9 889.8,648.3 894.0,641.2 898.2,650.4 902.5,651.4 906.7,636.1 910.9,651.4 915.2,645.3 919.4,636.1 923.6,651.9 927.9,640.2 932.1,641.2 936.3,634.6 940.6,641.7 944.8,641.2 949.0,638.1 953.3,643.3 957.5,651.9 961.7,637.1 965.9,645.3 970.2,635.1 974.4,651.9 978.6,641.2 982.9,642.2 987.1,635.6 991.3,635.1 995.6,646.3 999.8,651.4 1004.0,643.3 1008.3,647.8 1012.5,648.3 1016.7,651.4 1021.0,651.9 1025.2,650.9 1029.4,634.1 1033.7,648.3 1037.9,636.6 1042.1,651.9 1046.4,639.7 1050.6,651.9 1054.8,617.8 1059.1,646.8 1063.3,651.9 1067.5,642.2 1071.8,645.3 1076.0,651.4 1080.2,635.6 1084.5,644.3 1088.7,651.4 1092.9,645.3 1097.2,651.4 1101.4,651.9 1105.6,648.3 1109.9,642.7 1114.1,651.9 1118.3,641.7 1122.6,643.8 1126.8,651.9 1131.0,640.2 1135.3,639.2 1139.5,634.1" fill="none" stroke="#dde6e6" stroke-width="1" stroke-linejoin="round"/>
<polyline points="331.0,617.8 335.2,612.5 339.5,617.6 343.7,593.4 347.9,620.6 352.2,618.3 356.4,616.3 360.6,620.3 364.9,611.7 369.1,618.8 373.3,621.4 377.6,610.5 381.8,617.8 386.0,615.8 390.3,609.7 394.5,616.8 398.7,619.6 403.0,620.3 407.2,618.3 411.4,613.2 415.7,615.8 419.9,594.2 424.1,621.4 428.4,621.4 432.6,599.5 436.8,589.8 441.1,602.5 445.3,619.8 449.5,621.4 453.8,614.2 458.0,619.3 462.2,621.1 466.5,620.6 470.7,620.9 474.9,621.4 479.2,619.6 483.4,621.9 487.6,613.7 491.9,582.2 496.1,619.8 500.3,613.7 504.6,610.7 508.8,593.4 513.0,620.3 517.3,620.3 521.5,620.6 525.7,618.6 530.0,618.8 534.2,620.0 538.4,614.7 542.6,590.8 546.9,612.7 551.1,621.4 555.3,621.4 559.6,600.0 563.8,620.3 568.0,620.3 572.3,620.6 576.5,620.6 580.7,618.8 585.0,406.0 589.2,472.8 593.4,481.2 597.7,518.3 601.9,548.6 606.1,592.6 610.4,485.4 614.6,479.3 618.8,501.4 623.1,557.6 627.3,561.2 631.5,593.2 635.8,458.2 640.0,440.5 644.2,357.8 648.5,408.3 652.7,587.0 656.9,506.5 661.2,591.8 665.4,589.8 669.6,597.4 673.9,470.0 678.1,555.6 682.3,557.0 686.6,365.1 690.8,517.7 695.0,599.6 699.3,539.3 703.5,585.6 707.7,450.1 712.0,507.0 716.2,491.6 720.4,591.2 724.7,523.9 728.9,601.6 733.1,604.4 737.4,601.1 741.6,598.0 745.8,601.6 750.1,599.6 754.3,573.0 758.5,540.4 762.8,568.8 767.0,603.0 771.2,604.4 775.5,519.4 779.7,582.8 783.9,598.2 788.2,619.9 792.4,606.7 796.6,621.8 800.9,621.8 805.1,615.6 809.3,620.4 813.6,615.8 817.8,619.3 822.0,619.8 826.3,619.8 830.5,619.8 834.7,618.8 839.0,611.2 843.2,617.8 847.4,621.4 851.7,622.4 855.9,621.4 860.1,615.8 864.4,610.2 868.6,618.8 872.8,619.3 877.1,618.3 881.3,619.8 885.5,617.8 889.8,616.3 894.0,618.3 898.2,610.2 902.5,618.8 906.7,619.3 910.9,618.3 915.2,617.8 919.4,619.3 923.6,619.8 927.9,620.3 932.1,620.9 936.3,619.3 940.6,620.3 944.8,618.8 949.0,621.9 953.3,622.9 957.5,599.0 961.7,621.4 965.9,621.4 970.2,618.8 974.4,612.7 978.6,622.4 982.9,622.4 987.1,622.4 991.3,619.3 995.6,618.3 999.8,616.3 1004.0,621.9 1008.3,621.4 1012.5,622.9 1016.7,617.8 1021.0,612.2 1025.2,620.3 1029.4,618.8 1033.7,621.4 1037.9,621.9 1042.1,616.8 1046.4,617.3 1050.6,589.3 1054.8,584.7 1059.1,621.4 1063.3,615.8 1067.5,620.9 1071.8,621.9 1076.0,622.4 1080.2,620.3 1084.5,621.9 1088.7,613.2 1092.9,621.9 1097.2,614.2 1101.4,613.7 1105.6,621.9 1109.9,619.3 1114.1,619.8 1118.3,621.4 1122.6,621.9 1126.8,602.5 1131.0,621.9 1135.3,621.9 1139.5,619.8" fill="none" stroke="#e9e8d4" stroke-width="1" stroke-linejoin="round"/>
<polyline points="331.0,633.6 335.2,628.5 339.5,632.6 343.7,609.1 347.9,636.1 352.2,633.1 356.4,632.6 360.6,636.1 364.9,626.8 369.1,635.1 373.3,636.6 377.6,625.4 381.8,633.6 386.0,631.0 390.3,624.2 394.5,633.1 398.7,635.1 403.0,635.1 407.2,634.6 411.4,628.5 415.7,630.5 419.9,610.2 424.1,636.6 428.4,636.1 432.6,614.7 436.8,605.6 441.1,617.8 445.3,636.1 449.5,636.1 453.8,628.5 458.0,635.6 462.2,636.6 466.5,635.9 470.7,636.4 474.9,636.4 479.2,634.4 483.4,636.1 487.6,629.0 491.9,596.4 496.1,634.1 500.3,629.5 504.6,624.9 508.8,609.7 513.0,635.9 517.3,634.9 521.5,636.1 525.7,634.1 530.0,633.6 534.2,635.6 538.4,630.0 542.6,613.7 546.9,628.5 551.1,636.1 555.3,635.6 559.6,615.8 563.8,636.1 568.0,635.1 572.3,636.1 576.5,636.1 580.7,633.6 585.0,442.2 589.2,507.9 593.4,521.1 597.7,568.2 601.9,582.2 606.1,624.1 610.4,522.5 614.6,528.9 618.8,536.5 623.1,598.8 627.3,594.0 631.5,635.3 635.8,497.5 640.0,482.6 644.2,388.6 648.5,441.9 652.7,624.1 656.9,537.9 661.2,632.5 665.4,624.6 669.6,633.0 673.9,500.0 678.1,585.6 682.3,585.6 686.6,397.3 690.8,545.8 695.0,624.6 699.3,564.0 703.5,608.1 707.7,476.2 712.0,546.6 716.2,514.3 720.4,621.8 724.7,546.6 728.9,626.0 733.1,631.6 737.4,628.3 741.6,623.2 745.8,630.2 750.1,628.8 754.3,619.0 758.5,562.6 762.8,594.0 767.0,626.9 771.2,632.5 775.5,542.7 779.7,621.8 783.9,627.4 788.2,635.8 792.4,621.5 796.6,637.0 800.9,636.7 805.1,630.2 809.3,634.4 813.6,630.5 817.8,635.1 822.0,635.1 826.3,635.1 830.5,635.1 834.7,635.1 839.0,629.5 843.2,633.1 847.4,636.6 851.7,637.1 855.9,636.1 860.1,633.6 864.4,630.5 868.6,635.1 872.8,634.1 877.1,634.6 881.3,636.1 885.5,634.1 889.8,632.1 894.0,636.1 898.2,628.0 902.5,634.1 906.7,635.1 910.9,632.1 915.2,636.1 919.4,635.1 923.6,635.6 927.9,637.1 932.1,636.1 936.3,634.1 940.6,636.6 944.8,634.6 949.0,637.1 953.3,638.1 957.5,613.2 961.7,637.1 965.9,637.1 970.2,635.1 974.4,626.4 978.6,636.6 982.9,637.1 987.1,635.1 991.3,635.1 995.6,633.6 999.8,630.5 1004.0,637.1 1008.3,636.6 1012.5,637.1 1016.7,632.1 1021.0,627.5 1025.2,635.1 1029.4,633.6 1033.7,636.1 1037.9,636.6 1042.1,632.6 1046.4,633.6 1050.6,604.1 1054.8,617.8 1059.1,636.6 1063.3,630.5 1067.5,636.1 1071.8,636.6 1076.0,637.1 1080.2,635.6 1084.5,636.1 1088.7,627.5 1092.9,636.6 1097.2,629.5 1101.4,628.5 1105.6,636.6 1109.9,634.1 1114.1,634.1 1118.3,636.1 1122.6,636.6 1126.8,617.3 1131.0,636.6 1135.3,636.6 1139.5,634.1" fill="none" stroke="#e2efef" stroke-width="1" stroke-linejoin="round"/>
</g>
<rect x="812.1" y="385" width="222.6" height="25.9" fill="#eceeee"/>
<text x="821.1" y="402" font-size="10.3" fill="#333" font-family='"DejaVu Sans", "Liberation Sans", sans-serif' textLength="135.4" lengthAdjust="spacing">Perf. Capacity Information</text>
<rect x="826" y="427.3" width="20" height="10.8" fill="#cccccc"/>
<text x="856.2" y="436.9" font-size="10.3" fill="#333" font-family='"DejaVu Sans", "Liberation Sans", sans-serif'>Perf. Capacity Free</text>
<text x="979.7" y="436.9" font-size="10.3" fill="#333" font-family='"DejaVu Sans", "Liberation Sans", sans-serif' textLength="34" lengthAdjust="spacing">77.6 %</text>
<text x="826" y="463.9" font-size="10.3" fill="#333" font-family='"DejaVu Sans", "Liberation Sans", sans-serif' textLength="142.3" lengthAdjust="spacing">Primary (opm-mobility-02)</text>
<rect x="826" y="481.2" width="20" height="10.8" fill="#cccc99"/>
<text x="856.2" y="490.8" font-size="10.3" fill="#333" font-family='"DejaVu Sans", "Liberation Sans", sans-serif'>User Protocols</text>
<text x="979.7" y="490.8" font-size="10.3" fill="#333" font-family='"DejaVu Sans", "Liberation Sans", sans-serif' textLength="34" lengthAdjust="spacing">5.07 %</text>
<rect x="826" y="508.2" width="20" height="10.8" fill="#999966"/>
<text x="856.2" y="517.8" font-size="10.3" fill="#333" font-family='"DejaVu Sans", "Liberation Sans", sans-serif'>Background</text>
<text x="979.7" y="517.8" font-size="10.3" fill="#333" font-family='"DejaVu Sans", "Liberation Sans", sans-serif' textLength="29" lengthAdjust="spacing">&lt; 1 %</text>
<text x="826" y="544.7" font-size="10.3" fill="#333" font-family='"DejaVu Sans", "Liberation Sans", sans-serif' textLength="140.5" lengthAdjust="spacing">Partner (opm-mobility-01)</text>
<rect x="826" y="562.1" width="20" height="10.8" fill="#ccffff"/>
<text x="856.2" y="571.7" font-size="10.3" fill="#333" font-family='"DejaVu Sans", "Liberation Sans", sans-serif'>User Protocols</text>
<text x="979.7" y="571.7" font-size="10.3" fill="#333" font-family='"DejaVu Sans", "Liberation Sans", sans-serif' textLength="34" lengthAdjust="spacing">17.3 %</text>
<rect x="826" y="589.0" width="20" height="10.8" fill="#99cccc"/>
<text x="856.2" y="598.6" font-size="10.3" fill="#333" font-family='"DejaVu Sans", "Liberation Sans", sans-serif'>Background</text>
<text x="979.7" y="598.6" font-size="10.3" fill="#333" font-family='"DejaVu Sans", "Liberation Sans", sans-serif' textLength="29" lengthAdjust="spacing">&lt; 1 %</text>
<text x="821.5" y="629.9" font-size="10.3" fill="#333" font-family='"DejaVu Sans", "Liberation Sans", sans-serif' textLength="125.2" lengthAdjust="spacing">05:14 AM, Mar 07, 2016</text>
</g>
<!-- threshold legend lines -->
<rect x="12" y="246" width="39" height="3" fill="#e0605f"/>
<g fill="#f5c548"><rect x="12" y="272" width="6" height="3"/><path d="M24.4 272h6.6l-0.6 3h-6.6z"/><path d="M37.2 272h6.8l-0.7 3h-6.8z"/><rect x="48.8" y="272.3" width="0.8" height="2.4" fill-opacity=".35"/></g>
<rect x="12" y="297" width="30" height="3" fill="#000"/>
<!-- carets -->
<path d="M238 214h7l-3.5 3.4z" fill="#1a1a1a"/>
<path d="M1162.2 20h6l-3 3z" fill="#1a1a1a"/>
<!-- calendar -->
<g fill="#333"><rect x="892" y="14.3" width="10" height="2"/><rect x="892" y="13.6" width="1.6" height="1.5"/><rect x="900.4" y="13.6" width="1.6" height="1.5"/><rect x="892" y="17.5" width="10" height="7.3"/></g>
<g fill="#fff" fill-opacity=".75"><rect x="893.2" y="18.6" width="1" height="3.3"/><rect x="895" y="18.6" width="1" height="3.3"/><rect x="896.8" y="18.6" width="1" height="3.3"/><rect x="898.6" y="18.6" width="1" height="3.3"/><rect x="900.2" y="18.6" width="0.8" height="3.3"/><rect x="893.2" y="22.8" width="7.8" height="0.9"/></g>
<!-- help -->
<circle cx="438.3" cy="19.8" r="5.6" fill="#5b9bd5"/>
<text x="438.3" y="23.6" text-anchor="middle" font-size="10.5" font-weight="700" fill="#fff" font-family='"Liberation Sans", sans-serif'>?</text>
<!-- event icons small -->
<g id="crit-s"><circle cx="23" cy="80.7" r="5.6" fill="#e25f62"/><path d="M20.7 78.4l4.6 4.6M25.3 78.4l-4.6 4.6" stroke="#fff" stroke-width="1.4" stroke-linecap="round"/></g>
<g id="warn-s"><path d="M22.9 95l4.8 9.8h-9.6z" fill="#f8ca63" stroke="#f8ca63" stroke-width="0.8" stroke-linejoin="round"/><rect x="22.35" y="98.2" width="1.1" height="3.6" fill="#fff" fill-opacity=".85"/><rect x="22.35" y="102.6" width="1.1" height="1.1" fill="#fff" fill-opacity=".85"/></g>
<g id="info-s"><circle cx="23.3" cy="119.5" r="5.7" fill="#5a9ad5"/><rect x="22.6" y="118.4" width="1.6" height="4.6" fill="#fff"/><rect x="21.8" y="118.4" width="1.8" height="0.9" fill="#fff"/><rect x="21.6" y="122.5" width="3.6" height="0.9" fill="#fff"/><circle cx="23.4" cy="116.4" r="1" fill="#fff"/></g>
<!-- event icons big -->
<g id="crit-b"><circle cx="233.9" cy="57.9" r="7" fill="#e25f62"/><path d="M230.6 54.6l6.6 6.6M237.2 54.6l-6.6 6.6" stroke="#fff" stroke-width="1.6" stroke-linecap="round"/></g>
<g id="warn-b"><path d="M233.9 86.6l6.4 12.6h-12.8z" fill="#f8ca63" stroke="#f8ca63" stroke-width="1" stroke-linejoin="round"/><rect x="233.2" y="90.4" width="1.5" height="4.8" fill="#fff" fill-opacity=".9"/><rect x="233.2" y="96.4" width="1.5" height="1.5" fill="#fff" fill-opacity=".9"/></g>
<g id="info-b"><circle cx="234" cy="127" r="7" fill="#5a9ad5"/><rect x="233.1" y="125.8" width="2" height="5.6" fill="#fff"/><rect x="232.1" y="125.8" width="2.2" height="1.1" fill="#fff"/><rect x="231.9" y="130.7" width="4.4" height="1.1" fill="#fff"/><circle cx="234.1" cy="122.9" r="1.3" fill="#fff"/></g>
<!-- eyes -->
<defs><g id="eye"><path d="M-9.6,0 C-6.4,-3.9 -3,-5 0,-5 C3,-5 6.4,-3.9 9.6,0 C6.4,3.9 3,5 0,5 C-3,5 -6.4,3.9 -9.6,0Z" stroke-linejoin="miter" fill="none" stroke="currentColor" stroke-width="1.8"/><circle r="3.9" fill="none" stroke="currentColor" stroke-width="1.3"/><circle r="2.6" fill="currentColor"/></g></defs>
<use href="#eye" x="26.3" y="342.2" color="#cccccc"/>
<use href="#eye" x="26.3" y="395" color="#cccc99"/>
<use href="#eye" x="26.3" y="433" color="#999966"/>
<use href="#eye" x="26.3" y="486" color="#ccffff"/>
<use href="#eye" x="26.3" y="524.1" color="#99cccc"/>

</svg>
<div class="t" style="left:12.6px;top:11.10px;font-size:15px;font-weight:700;color:#222;letter-spacing:-0.065px;">Perf. Capacity Used (Advanced) for Node: opm-mobility-02</div>
<div class="t" style="left:793.2px;top:11.05px;font-size:14px;color:#333;letter-spacing:-0.283px;">Time Range</div>
<div class="t" style="left:909.7px;top:12.19px;font-size:11px;color:#444;letter-spacing:0.045px;">03:00 PM Mar 06 2016 to 07:00 AM Mar 07 2016</div>
<div class="t" style="left:17.8px;top:45.19px;font-size:11px;font-weight:700;color:#222;letter-spacing:0.074px;">Events Timeline</div>
<div class="t" style="left:42px;top:72.89px;font-size:11px;color:#444;letter-spacing:-0.028px;">Critical Events</div>
<div class="t" style="left:42px;top:91.99px;font-size:11px;color:#444;letter-spacing:0.058px;">Warning Events</div>
<div class="t" style="left:42px;top:111.89px;font-size:11px;color:#444;letter-spacing:0.196px;">Informational Events</div>
<div class="t" style="left:17.8px;top:158.39px;font-size:11px;font-weight:700;color:#222;letter-spacing:0.187px;">Perf. Capacity Information</div>
<div class="t" style="left:12px;top:184.99px;font-size:11px;color:#444;letter-spacing:-0.044px;">Show Policy:</div>
<div class="t" style="left:21.5px;top:207.19px;font-size:11px;color:#444;letter-spacing:0.046px;">Choose Threshold Policy</div>
<div class="t" style="left:61.3px;top:239.19px;font-size:11px;color:#444;letter-spacing:0.159px;">Critical Threshold</div>
<div class="t" style="left:60.9px;top:264.99px;font-size:11px;color:#444;letter-spacing:0.192px;">Warning Threshold</div>
<div class="t" style="left:53.8px;top:290.19px;font-size:11px;color:#444;letter-spacing:-0.022px;">100% Optimal Perf. Capacity Used</div>
<div class="t" style="left:40.5px;top:333.19px;font-size:11px;color:#444;letter-spacing:-0.115px;">Perf. Capacity Free</div>
<div class="t" style="left:12.2px;top:359.99px;font-size:11px;font-weight:700;color:#222;letter-spacing:0.204px;">Primary (opm-mobility-02)</div>
<div class="t" style="left:40.5px;top:385.89px;font-size:11px;color:#444;letter-spacing:0.058px;">User Protocols</div>
<div class="t" style="left:40.5px;top:424.09px;font-size:11px;color:#444;letter-spacing:0.120px;">Background</div>
<div class="t" style="left:12.2px;top:450.89px;font-size:11px;font-weight:700;color:#222;letter-spacing:0.227px;">Partner (opm-mobility-01)</div>
<div class="t" style="left:40.5px;top:476.79px;font-size:11px;color:#444;letter-spacing:0.058px;">User Protocols</div>
<div class="t" style="left:40.5px;top:514.89px;font-size:11px;color:#444;letter-spacing:0.120px;">Background</div>
<div class="t" style="left:17.5px;top:706.79px;font-size:11px;font-weight:700;color:#222;letter-spacing:0.031px;">Statistics</div>
<div class="t" style="left:154.5px;width:400px;text-align:center;top:712.50px;font-size:13px;font-weight:700;color:#222;">5%</div>
<div class="t" style="left:154.5px;width:400px;text-align:center;top:729.19px;font-size:11px;color:#555;">Min</div>
<div class="t" style="left:152.60000000000002px;width:400px;text-align:center;top:759.19px;font-size:11px;color:#444;letter-spacing:-0.020px;">03:59 AM, Mar 07, 2016</div>
<div class="t" style="left:381.20000000000005px;width:400px;text-align:center;top:712.50px;font-size:13px;font-weight:700;color:#222;">7%</div>
<div class="t" style="left:381.20000000000005px;width:400px;text-align:center;top:729.19px;font-size:11px;color:#555;">Average</div>
<div class="t" style="left:383.70000000000005px;width:400px;text-align:center;top:759.19px;font-size:11px;color:#444;letter-spacing:-0.006px;">3:00 PM Mar 06, 2016 - 7:00 AM Mar 07, 2016</div>
<div class="t" style="left:614.1px;width:400px;text-align:center;top:712.50px;font-size:13px;font-weight:700;color:#222;">14%</div>
<div class="t" style="left:614.1px;width:400px;text-align:center;top:729.19px;font-size:11px;color:#555;">95th%</div>
<div class="t" style="left:614.5px;width:400px;text-align:center;top:759.19px;font-size:11px;color:#444;letter-spacing:-0.009px;">3:00 PM Mar 06, 2016 - 7:00 AM Mar 07, 2016</div>
<div class="t" style="left:840.2px;width:400px;text-align:center;top:712.50px;font-size:13px;font-weight:700;color:#222;">18%</div>
<div class="t" style="left:840.2px;width:400px;text-align:center;top:729.19px;font-size:11px;color:#555;">Max</div>
<div class="t" style="left:845.4000000000001px;width:400px;text-align:center;top:759.19px;font-size:11px;color:#444;letter-spacing:-0.058px;">08:39 PM, Mar 06, 2016</div>
</div>
</body>
</html>
